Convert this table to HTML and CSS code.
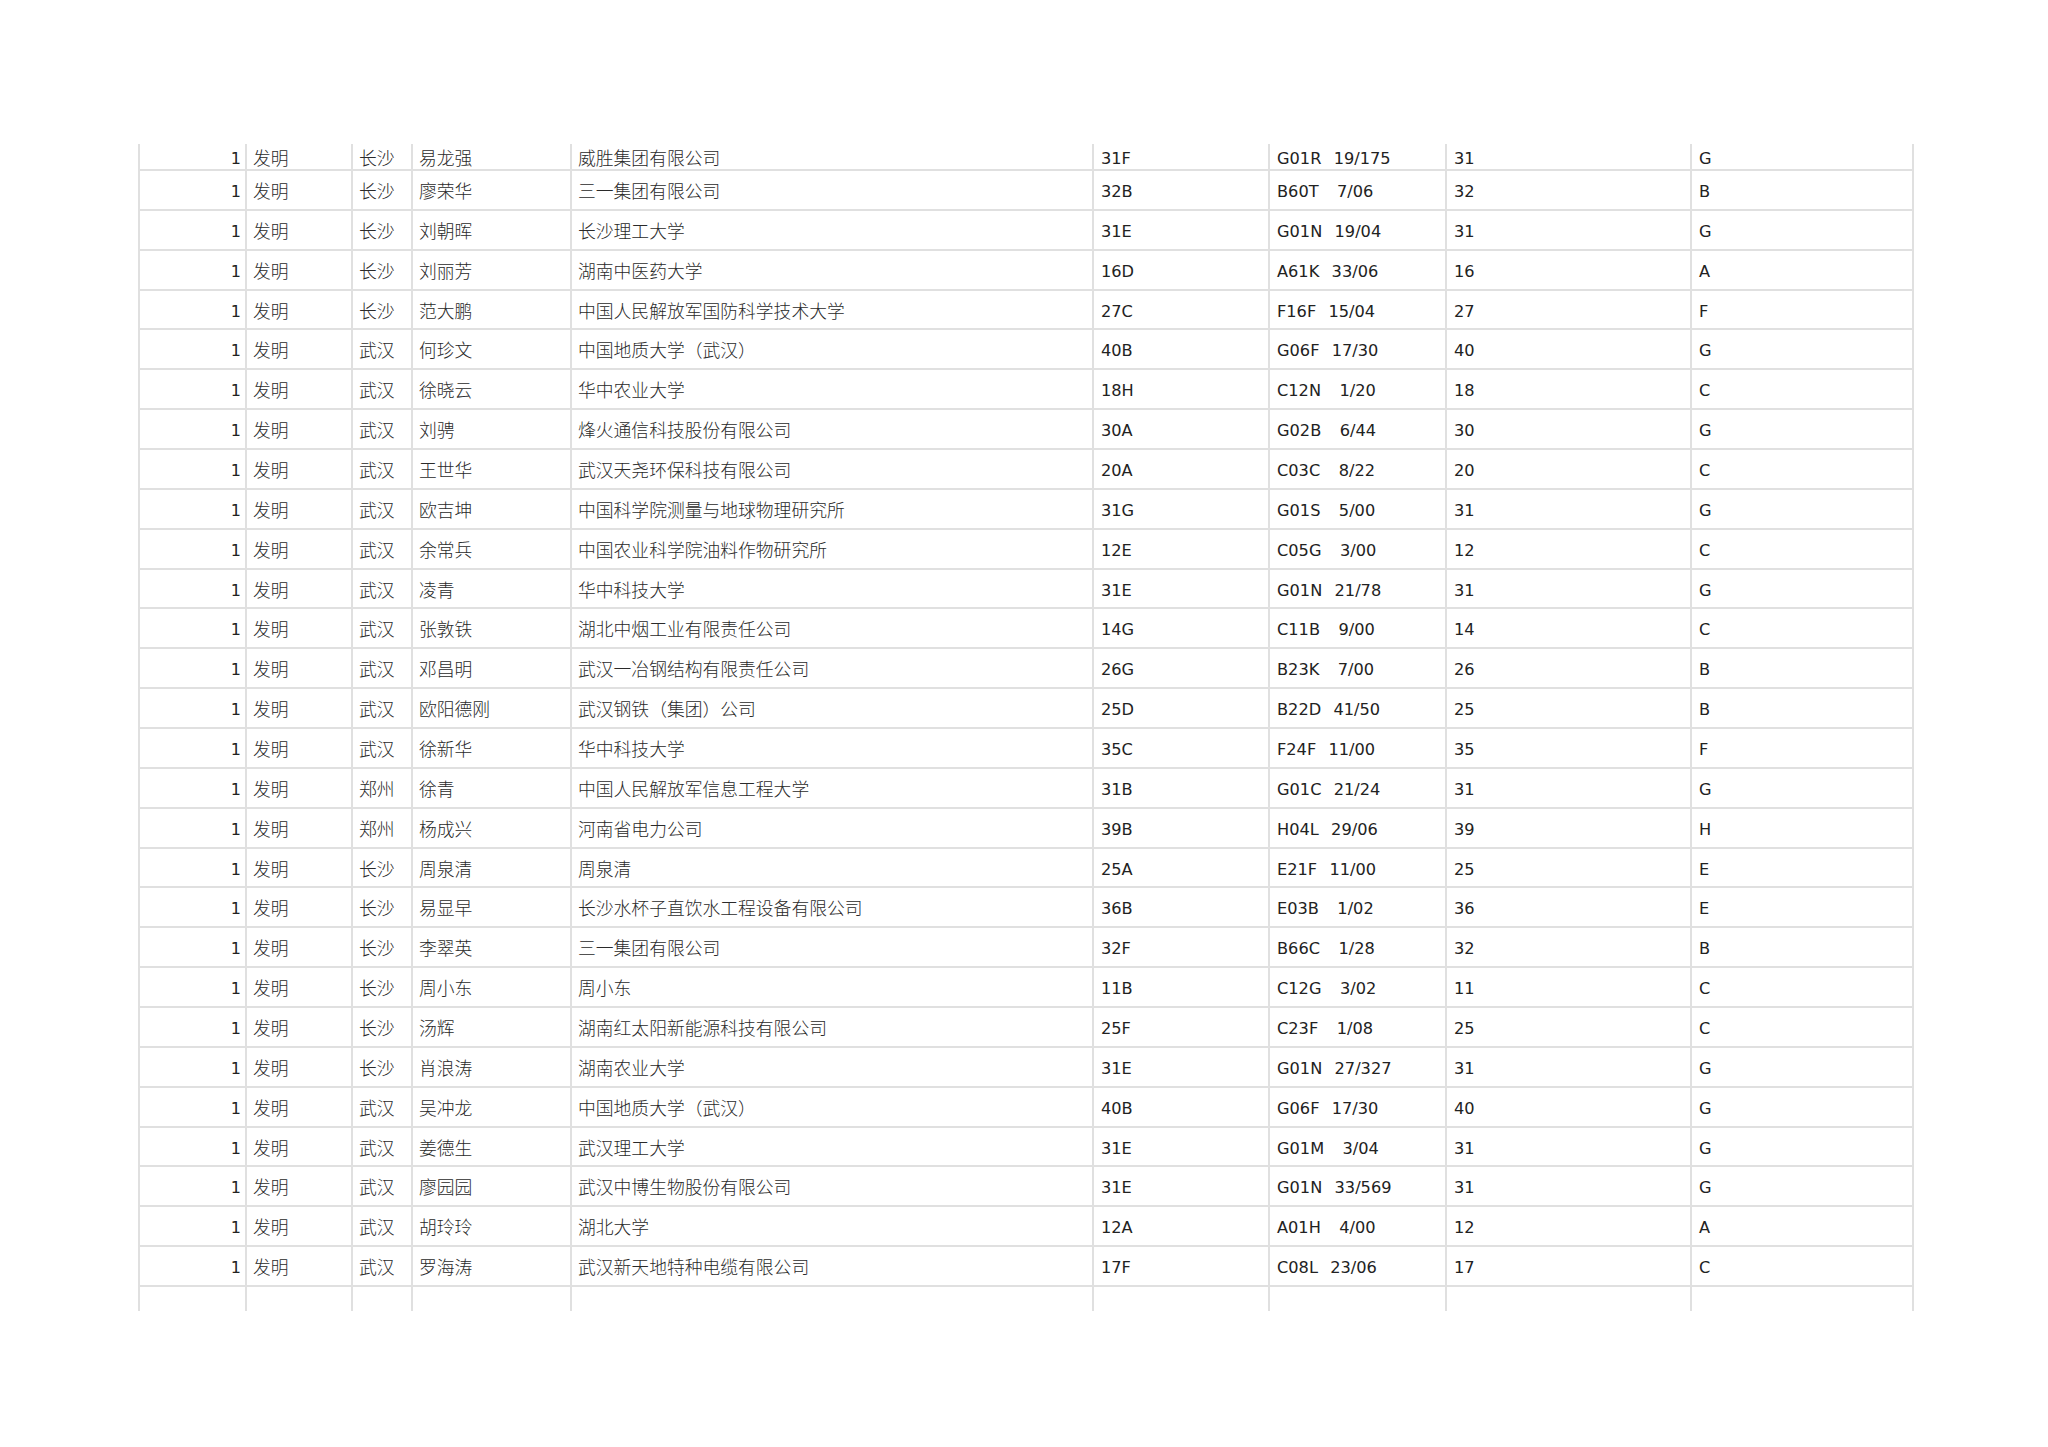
FILE: index.html
```html
<!DOCTYPE html>
<html lang="zh-CN">
<head>
<meta charset="utf-8">
<title>发明专利列表</title>
<link rel="stylesheet" href="styles.css">
</head>
<body>
<div class="page">
  <div class="sheet">
    <div class="row first"><div class="c n">1</div><div class="c z">发明</div><div class="c z">长沙</div><div class="c z">易龙强</div><div class="c z">威胜集团有限公司</div><div class="c l">31F</div><div class="c l">G01R  19/175</div><div class="c l">31</div><div class="c l last">G</div></div>
    <div class="row"><div class="c n">1</div><div class="c z">发明</div><div class="c z">长沙</div><div class="c z">廖荣华</div><div class="c z">三一集团有限公司</div><div class="c l">32B</div><div class="c l">B60T   7/06</div><div class="c l">32</div><div class="c l last">B</div></div>
    <div class="row"><div class="c n">1</div><div class="c z">发明</div><div class="c z">长沙</div><div class="c z">刘朝晖</div><div class="c z">长沙理工大学</div><div class="c l">31E</div><div class="c l">G01N  19/04</div><div class="c l">31</div><div class="c l last">G</div></div>
    <div class="row"><div class="c n">1</div><div class="c z">发明</div><div class="c z">长沙</div><div class="c z">刘丽芳</div><div class="c z">湖南中医药大学</div><div class="c l">16D</div><div class="c l">A61K  33/06</div><div class="c l">16</div><div class="c l last">A</div></div>
    <div class="row"><div class="c n">1</div><div class="c z">发明</div><div class="c z">长沙</div><div class="c z">范大鹏</div><div class="c z">中国人民解放军国防科学技术大学</div><div class="c l">27C</div><div class="c l">F16F  15/04</div><div class="c l">27</div><div class="c l last">F</div></div>
    <div class="row"><div class="c n">1</div><div class="c z">发明</div><div class="c z">武汉</div><div class="c z">何珍文</div><div class="c z">中国地质大学（武汉）</div><div class="c l">40B</div><div class="c l">G06F  17/30</div><div class="c l">40</div><div class="c l last">G</div></div>
    <div class="row"><div class="c n">1</div><div class="c z">发明</div><div class="c z">武汉</div><div class="c z">徐晓云</div><div class="c z">华中农业大学</div><div class="c l">18H</div><div class="c l">C12N   1/20</div><div class="c l">18</div><div class="c l last">C</div></div>
    <div class="row"><div class="c n">1</div><div class="c z">发明</div><div class="c z">武汉</div><div class="c z">刘骋</div><div class="c z">烽火通信科技股份有限公司</div><div class="c l">30A</div><div class="c l">G02B   6/44</div><div class="c l">30</div><div class="c l last">G</div></div>
    <div class="row"><div class="c n">1</div><div class="c z">发明</div><div class="c z">武汉</div><div class="c z">王世华</div><div class="c z">武汉天尧环保科技有限公司</div><div class="c l">20A</div><div class="c l">C03C   8/22</div><div class="c l">20</div><div class="c l last">C</div></div>
    <div class="row"><div class="c n">1</div><div class="c z">发明</div><div class="c z">武汉</div><div class="c z">欧吉坤</div><div class="c z">中国科学院测量与地球物理研究所</div><div class="c l">31G</div><div class="c l">G01S   5/00</div><div class="c l">31</div><div class="c l last">G</div></div>
    <div class="row"><div class="c n">1</div><div class="c z">发明</div><div class="c z">武汉</div><div class="c z">余常兵</div><div class="c z">中国农业科学院油料作物研究所</div><div class="c l">12E</div><div class="c l">C05G   3/00</div><div class="c l">12</div><div class="c l last">C</div></div>
    <div class="row"><div class="c n">1</div><div class="c z">发明</div><div class="c z">武汉</div><div class="c z">凌青</div><div class="c z">华中科技大学</div><div class="c l">31E</div><div class="c l">G01N  21/78</div><div class="c l">31</div><div class="c l last">G</div></div>
    <div class="row"><div class="c n">1</div><div class="c z">发明</div><div class="c z">武汉</div><div class="c z">张敦铁</div><div class="c z">湖北中烟工业有限责任公司</div><div class="c l">14G</div><div class="c l">C11B   9/00</div><div class="c l">14</div><div class="c l last">C</div></div>
    <div class="row"><div class="c n">1</div><div class="c z">发明</div><div class="c z">武汉</div><div class="c z">邓昌明</div><div class="c z">武汉一冶钢结构有限责任公司</div><div class="c l">26G</div><div class="c l">B23K   7/00</div><div class="c l">26</div><div class="c l last">B</div></div>
    <div class="row"><div class="c n">1</div><div class="c z">发明</div><div class="c z">武汉</div><div class="c z">欧阳德刚</div><div class="c z">武汉钢铁（集团）公司</div><div class="c l">25D</div><div class="c l">B22D  41/50</div><div class="c l">25</div><div class="c l last">B</div></div>
    <div class="row"><div class="c n">1</div><div class="c z">发明</div><div class="c z">武汉</div><div class="c z">徐新华</div><div class="c z">华中科技大学</div><div class="c l">35C</div><div class="c l">F24F  11/00</div><div class="c l">35</div><div class="c l last">F</div></div>
    <div class="row"><div class="c n">1</div><div class="c z">发明</div><div class="c z">郑州</div><div class="c z">徐青</div><div class="c z">中国人民解放军信息工程大学</div><div class="c l">31B</div><div class="c l">G01C  21/24</div><div class="c l">31</div><div class="c l last">G</div></div>
    <div class="row"><div class="c n">1</div><div class="c z">发明</div><div class="c z">郑州</div><div class="c z">杨成兴</div><div class="c z">河南省电力公司</div><div class="c l">39B</div><div class="c l">H04L  29/06</div><div class="c l">39</div><div class="c l last">H</div></div>
    <div class="row"><div class="c n">1</div><div class="c z">发明</div><div class="c z">长沙</div><div class="c z">周泉清</div><div class="c z">周泉清</div><div class="c l">25A</div><div class="c l">E21F  11/00</div><div class="c l">25</div><div class="c l last">E</div></div>
    <div class="row"><div class="c n">1</div><div class="c z">发明</div><div class="c z">长沙</div><div class="c z">易显早</div><div class="c z">长沙水杯子直饮水工程设备有限公司</div><div class="c l">36B</div><div class="c l">E03B   1/02</div><div class="c l">36</div><div class="c l last">E</div></div>
    <div class="row"><div class="c n">1</div><div class="c z">发明</div><div class="c z">长沙</div><div class="c z">李翠英</div><div class="c z">三一集团有限公司</div><div class="c l">32F</div><div class="c l">B66C   1/28</div><div class="c l">32</div><div class="c l last">B</div></div>
    <div class="row"><div class="c n">1</div><div class="c z">发明</div><div class="c z">长沙</div><div class="c z">周小东</div><div class="c z">周小东</div><div class="c l">11B</div><div class="c l">C12G   3/02</div><div class="c l">11</div><div class="c l last">C</div></div>
    <div class="row"><div class="c n">1</div><div class="c z">发明</div><div class="c z">长沙</div><div class="c z">汤辉</div><div class="c z">湖南红太阳新能源科技有限公司</div><div class="c l">25F</div><div class="c l">C23F   1/08</div><div class="c l">25</div><div class="c l last">C</div></div>
    <div class="row"><div class="c n">1</div><div class="c z">发明</div><div class="c z">长沙</div><div class="c z">肖浪涛</div><div class="c z">湖南农业大学</div><div class="c l">31E</div><div class="c l">G01N  27/327</div><div class="c l">31</div><div class="c l last">G</div></div>
    <div class="row"><div class="c n">1</div><div class="c z">发明</div><div class="c z">武汉</div><div class="c z">吴冲龙</div><div class="c z">中国地质大学（武汉）</div><div class="c l">40B</div><div class="c l">G06F  17/30</div><div class="c l">40</div><div class="c l last">G</div></div>
    <div class="row"><div class="c n">1</div><div class="c z">发明</div><div class="c z">武汉</div><div class="c z">姜德生</div><div class="c z">武汉理工大学</div><div class="c l">31E</div><div class="c l">G01M   3/04</div><div class="c l">31</div><div class="c l last">G</div></div>
    <div class="row"><div class="c n">1</div><div class="c z">发明</div><div class="c z">武汉</div><div class="c z">廖园园</div><div class="c z">武汉中博生物股份有限公司</div><div class="c l">31E</div><div class="c l">G01N  33/569</div><div class="c l">31</div><div class="c l last">G</div></div>
    <div class="row"><div class="c n">1</div><div class="c z">发明</div><div class="c z">武汉</div><div class="c z">胡玲玲</div><div class="c z">湖北大学</div><div class="c l">12A</div><div class="c l">A01H   4/00</div><div class="c l">12</div><div class="c l last">A</div></div>
    <div class="row"><div class="c n">1</div><div class="c z">发明</div><div class="c z">武汉</div><div class="c z">罗海涛</div><div class="c z">武汉新天地特种电缆有限公司</div><div class="c l">17F</div><div class="c l">C08L  23/06</div><div class="c l">17</div><div class="c l last">C</div></div>
    <div class="row blank"><div class="c n"></div><div class="c z"></div><div class="c z"></div><div class="c z"></div><div class="c z"></div><div class="c l"></div><div class="c l"></div><div class="c l"></div><div class="c l last"></div></div>
  </div>
</div>
</body>
</html>
```

FILE: styles.css
```css
html, body {
  margin: 0;
  padding: 0;
  background: #ffffff;
}

.page {
  padding: 144px 0 0 138px;
  width: 2048px;
  height: 1447px;
  box-sizing: border-box;
  overflow: hidden;
}

.sheet {
  display: flex;
  flex-direction: column;
  width: 1776px;
}

.row {
  display: grid;
  grid-template-columns: 107px 106px 60px 159px 522px 176px 177px 245px 224px;
  height: 39.86px;
  box-sizing: border-box;
  border-bottom: 2px solid #e0e0e0;
}

.row.first {
  height: 27px;
}

.row.blank {
  height: 24px;
  border-bottom: none;
}

.c {
  display: flex;
  align-items: center;
  box-sizing: border-box;
  border-left: 2px solid #e0e0e0;
  padding: 0 6px;
  white-space: pre;
  overflow: hidden;
  color: #1c1c1c;
}

.c.last {
  border-right: 2px solid #e0e0e0;
}

.n {
  justify-content: flex-end;
  padding-right: 4px;
  padding-top: 3px;
  font-family: "DejaVu Sans", "Liberation Sans", sans-serif;
  font-size: 16px;
  color: #222222;
}

.z {
  font-family: "Noto Sans CJK SC", "Noto Sans CJK JP", sans-serif;
  font-size: 17.8px;
  font-weight: 300;
  color: #2a2a2a;
  padding-left: 6px;
}

.l {
  font-family: "DejaVu Sans", "Liberation Sans", sans-serif;
  font-size: 16.2px;
  word-spacing: 1px;
  padding-left: 7px;
  padding-top: 3px;
  color: #222222;
}
```
